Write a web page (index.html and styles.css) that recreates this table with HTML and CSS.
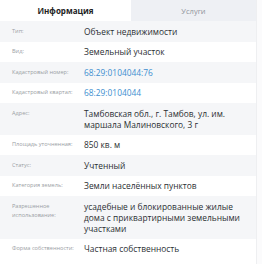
FILE: index.html
```html
<!DOCTYPE html>
<html lang="ru">
<head>
<meta charset="utf-8">
<link rel="stylesheet" href="styles.css">
</head>
<body>
<div class="page">
  <div class="panel">
    <div class="tabs">
      <div class="tab tab-active">Информация</div>
      <div class="tab">Услуги</div>
    </div>
    <div class="rows">
      <div class="row"><div class="label">Тип:</div><div class="value">Объект недвижимости</div></div>
      <div class="row"><div class="label">Вид:</div><div class="value">Земельный участок</div></div>
      <div class="row"><div class="label">Кадастровый номер:</div><div class="value link">68:29:0104044:76</div></div>
      <div class="row"><div class="label">Кадастровый квартал:</div><div class="value link">68:29:0104044</div></div>
      <div class="row"><div class="label">Адрес:</div><div class="value">Тамбовская обл., г. Тамбов, ул. им. маршала Малиновского, 3 г</div></div>
      <div class="row"><div class="label">Площадь уточненная:</div><div class="value">850 кв. м</div></div>
      <div class="row"><div class="label">Статус:</div><div class="value">Учтенный</div></div>
      <div class="row"><div class="label">Категория земель:</div><div class="value">Земли населённых пунктов</div></div>
      <div class="row"><div class="label">Разрешенное использование:</div><div class="value">усадебные и блокированные жилые дома с приквартирными земельными участками</div></div>
      <div class="row"><div class="label">Форма собственности:</div><div class="value">Частная собственность</div></div>
    </div>
  </div>
  <div class="strip"></div>
</div>
</body>
</html>
```
FILE: styles.css
```css
html, body {
  margin: 0;
  padding: 0;
  background: #ffffff;
}
body {
  font-family: "Open Sans", "Liberation Sans", sans-serif;
  width: 262px;
  height: 264px;
  overflow: hidden;
}
.page {
  display: flex;
  height: 264px;
}
.panel {
  width: 256px;
  flex: none;
}
.strip {
  flex: 1;
  background: #fbfbfc;
  border-left: 1px solid #eeeff1;
}
.tabs {
  display: grid;
  grid-template-columns: 131px 1fr;
  height: 21px;
}
.tab {
  display: flex;
  align-items: center;
  justify-content: center;
  font-size: 7.5px;
  color: #8f949b;
  background: #eef0f4;
}
.tab-active {
  background: #ffffff;
  color: #222;
  font-weight: 700;
  font-size: 8px;
}
.row {
  display: grid;
  grid-template-columns: 72px 1fr;
  align-items: start;
  padding: 4.75px 6px 4.75px 12px;
}
.row:nth-child(odd) {
  background: #f5f6f8;
}
.label {
  font-size: 5.6px;
  line-height: 11px;
  color: #9a9ea4;
  padding-right: 4px;
}
.row:nth-child(9) .label {
  line-height: 9px;
  padding-top: 1px;
}
.value {
  font-size: 8.4px;
  line-height: 11px;
  color: #2b2f33;
}
.link {
  color: #3e8fd0;
}
```
